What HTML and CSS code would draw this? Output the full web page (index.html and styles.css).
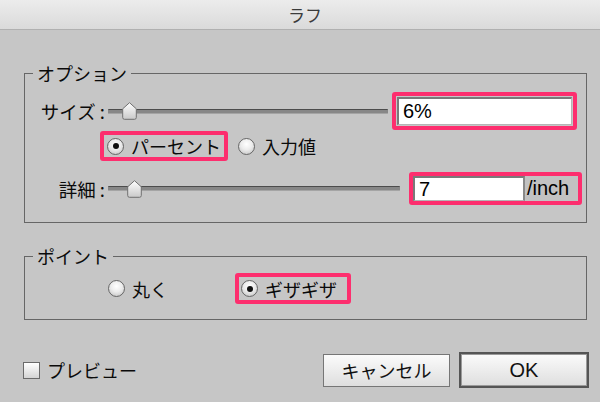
FILE: index.html
```html
<!DOCTYPE html>
<html lang="ja">
<head>
  <meta charset="UTF-8" />
  <title>ラフ</title>
  <link rel="stylesheet" href="styles.css">
</head>
<body>
  <div class="window">
    <div class="titlebar">ラフ</div>

    <fieldset class="group group-options">
      <legend>オプション</legend>

      <div class="row row-size">
        <span class="row-label">サイズ :</span>
        <div class="slider slider-size">
          <div class="track"></div>
          <svg class="thumb thumb-size" width="15" height="18" viewBox="0 0 15 18">
            <defs>
              <linearGradient id="thumbFill" x1="0" y1="0" x2="0" y2="1">
                <stop offset="0" stop-color="#ffffff" />
                <stop offset="1" stop-color="#c9c9c9" />
              </linearGradient>
            </defs>
            <path d="M7.5 0.7 L14.3 6.8 L14.3 15.5 Q14.3 17.3 12.5 17.3 L2.5 17.3 Q0.7 17.3 0.7 15.5 L0.7 6.8 Z" fill="url(#thumbFill)" stroke="#707070" stroke-width="1" />
          </svg>
        </div>
        <div class="mark mark-size">
          <div class="input">6%</div>
        </div>
      </div>

      <div class="row row-units">
        <div class="mark mark-radio">
          <span class="radio checked"></span>
          <span class="radio-text">パーセント</span>
        </div>
        <div class="choice">
          <span class="radio"></span>
          <span class="radio-text">入力値</span>
        </div>
      </div>

      <div class="row row-detail">
        <span class="row-label">詳細 :</span>
        <div class="slider slider-detail">
          <div class="track"></div>
          <svg class="thumb thumb-detail" width="15" height="18" viewBox="0 0 15 18">
            <path d="M7.5 0.7 L14.3 6.8 L14.3 15.5 Q14.3 17.3 12.5 17.3 L2.5 17.3 Q0.7 17.3 0.7 15.5 L0.7 6.8 Z" fill="url(#thumbFill)" stroke="#707070" stroke-width="1" />
          </svg>
        </div>
        <div class="mark mark-detail">
          <div class="input">7</div>
          <span class="unit">/inch</span>
        </div>
      </div>
    </fieldset>

    <fieldset class="group group-points">
      <legend>ポイント</legend>

      <div class="row row-points">
        <div class="choice choice-round">
          <span class="radio"></span>
          <span class="radio-text">丸く</span>
        </div>
        <div class="mark mark-jagged">
          <span class="radio checked"></span>
          <span class="radio-text">ギザギザ</span>
        </div>
      </div>
    </fieldset>

    <div class="footer">
      <label class="preview">
        <span class="checkbox"></span>
        <span>プレビュー</span>
      </label>
      <div class="buttons">
        <button class="btn btn-cancel">キャンセル</button>
        <button class="btn btn-ok">OK</button>
      </div>
    </div>
  </div>
</body>
</html>
```

FILE: styles.css
```css
* {
  margin: 0;
  padding: 0;
  box-sizing: border-box;
}

body {
  width: 600px;
  height: 402px;
  overflow: hidden;
  background: #c6c6c6;
  color: #0a0a0a;
  font-family: "Noto Sans CJK JP", "Liberation Sans", sans-serif;
  font-size: 18px;
}

.window {
  width: 600px;
  height: 402px;
}

.titlebar {
  height: 30px;
  display: flex;
  align-items: center;
  justify-content: center;
  padding-left: 10px;
  padding-bottom: 1px;
  background: linear-gradient(#ececec, #dadada);
  border-bottom: 1px solid #b0b0b0;
  color: #3b3b3b;
  font-size: 17px;
}

/* groups */

.group {
  margin: 32px 13px 0 24px;
  border: 1px solid #666;
  padding: 0 0 17px 0;
  min-width: 0;
}

.group legend {
  margin-left: 8px;
  padding: 0 4px;
  line-height: 22px;
  font-size: 18px;
}

.group-points {
  margin-top: 22px;
  padding-bottom: 15px;
}

.row {
  display: flex;
  align-items: center;
}

.row-label {
  width: 80px;
  text-align: right;
  white-space: pre;
  font-size: 18.5px;
}

.row-size {
  margin-top: 8px;
  height: 38px;
}

.row-units {
  margin-top: 1px;
  height: 30px;
  padding-left: 75px;
}

.row-detail {
  margin-top: 11px;
  height: 33px;
}

.row-points {
  margin-top: 6px;
  height: 31px;
  padding-left: 83px;
}

/* sliders */

.slider {
  position: relative;
  height: 20px;
  margin-left: 3px;
  display: flex;
  align-items: center;
}

.slider-size {
  width: 280px;
}

.slider-detail {
  width: 292px;
}

.track {
  width: 100%;
  height: 5px;
  background: #878787;
  border-top: 1px solid #4c4c4c;
  border-bottom: 1px solid #a4a4a4;
  border-radius: 1px;
}

.thumb {
  position: absolute;
  top: 1px;
}

.thumb-size {
  left: 14px;
}

.thumb-detail {
  left: 19px;
}

/* pink highlight marks */

.mark {
  border: 4px solid #fd2e6e;
  border-radius: 3px;
  display: flex;
  align-items: center;
}

.mark-size {
  margin-left: 4px;
  width: 185px;
  height: 38px;
  padding: 1px;
}

.mark-detail {
  margin-left: 9px;
  width: 173px;
  height: 33px;
}

.mark-radio {
  width: 128px;
  height: 30px;
  padding-left: 3px;
}

.mark-jagged {
  margin-left: 67px;
  width: 116px;
  height: 31px;
  padding-left: 2px;
}

.input {
  height: 100%;
  flex: 1;
  background: #fff;
  border-top: 2px solid #7a7a7a;
  border-left: 2px solid #7a7a7a;
  border-right: 1px solid #b5b5b5;
  border-bottom: 1px solid #b5b5b5;
  padding-left: 4px;
  display: flex;
  align-items: center;
  font-family: "Liberation Sans", sans-serif;
  font-size: 20px;
  color: #000;
}

.mark-detail .input {
  flex: 0 0 112px;
  border-right: 2px solid #8a8a8a;
}

.unit {
  flex: 1;
  height: 100%;
  display: flex;
  align-items: center;
  padding-left: 2px;
  background: #c2c2c2;
  font-family: "Liberation Sans", sans-serif;
  font-size: 20px;
  color: #000;
}

/* radios */

.choice {
  display: flex;
  align-items: center;
  margin-left: 10px;
}

.choice-round {
  margin-left: 0;
}

.radio {
  width: 17px;
  height: 17px;
  border-radius: 50%;
  border: 1px solid #666;
  background: radial-gradient(circle at 50% 35%, #ffffff 0%, #ececec 45%, #bdbdbd 100%);
  display: flex;
  align-items: center;
  justify-content: center;
  flex: none;
}

.radio.checked::after {
  content: "";
  width: 6px;
  height: 6px;
  border-radius: 50%;
  background: #111;
}

.radio-text {
  margin-left: 7px;
}

/* footer */

.footer {
  margin-top: 32px;
  height: 36px;
  padding: 0 11px 0 23px;
  display: flex;
  align-items: center;
  justify-content: space-between;
}

.preview {
  display: flex;
  align-items: center;
  gap: 7px;
}

.checkbox {
  width: 17px;
  height: 17px;
  border: 1px solid #6a6a6a;
  background: linear-gradient(#ffffff, #d4d4d4);
}

.buttons {
  display: flex;
  align-items: center;
  gap: 9px;
}

.btn {
  font-family: "Noto Sans CJK JP", "Liberation Sans", sans-serif;
  font-size: 18px;
  color: #111;
  background: linear-gradient(#fbfbfb, #dedede);
  border: 1px solid #767676;
  display: flex;
  align-items: center;
  justify-content: center;
}

.btn-cancel {
  width: 127px;
  height: 33px;
}

.btn-ok {
  width: 130px;
  height: 36px;
  border: 2px solid #555;
  box-shadow: inset 0 0 0 1px #9a9a9a;
  font-family: "Liberation Sans", sans-serif;
  font-size: 20px;
}
```
